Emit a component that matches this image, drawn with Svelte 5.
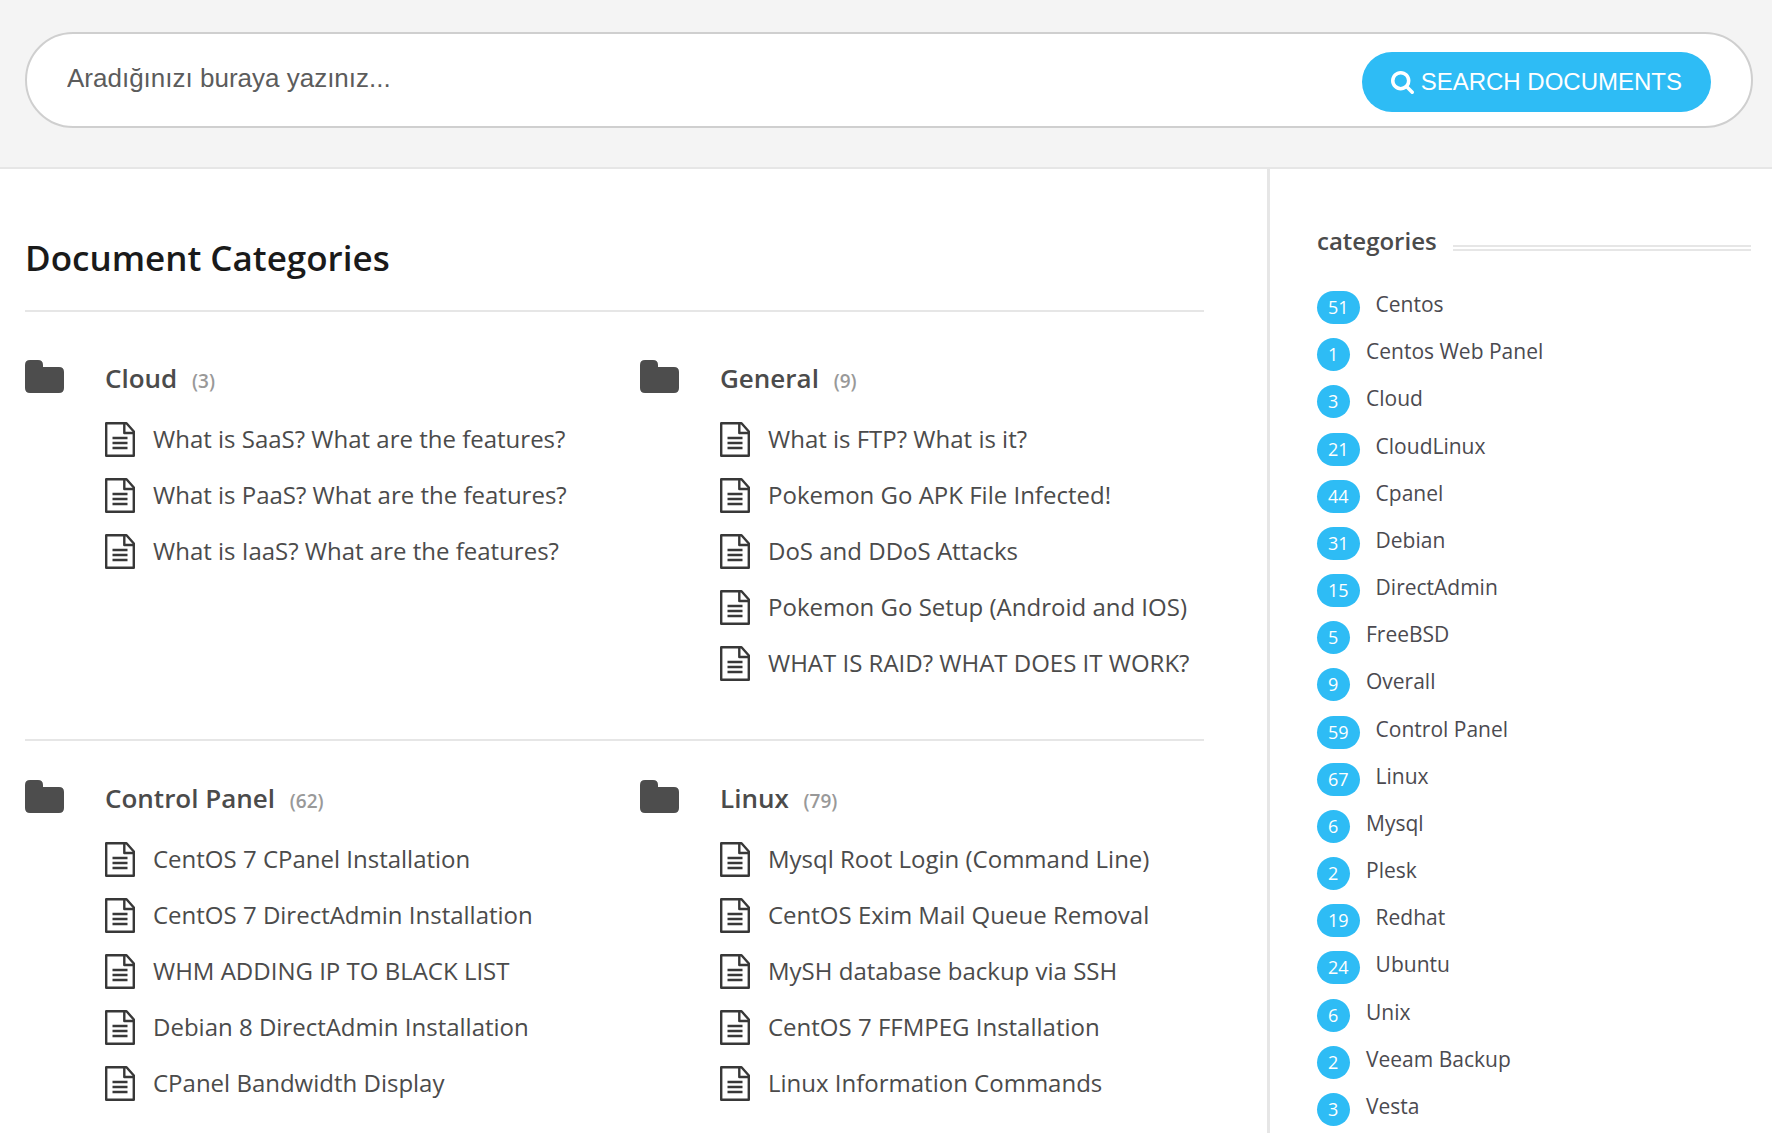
<script lang="ts">
  const sections = [
    [
      {
        name: 'Cloud',
        count: 3,
        docs: [
          'What is SaaS? What are the features?',
          'What is PaaS? What are the features?',
          'What is IaaS? What are the features?',
        ],
      },
      {
        name: 'General',
        count: 9,
        docs: [
          'What is FTP? What is it?',
          'Pokemon Go APK File Infected!',
          'DoS and DDoS Attacks',
          'Pokemon Go Setup (Android and IOS)',
          'WHAT IS RAID? WHAT DOES IT WORK?',
        ],
      },
    ],
    [
      {
        name: 'Control Panel',
        count: 62,
        docs: [
          'CentOS 7 CPanel Installation',
          'CentOS 7 DirectAdmin Installation',
          'WHM ADDING IP TO BLACK LIST',
          'Debian 8 DirectAdmin Installation',
          'CPanel Bandwidth Display',
        ],
      },
      {
        name: 'Linux',
        count: 79,
        docs: [
          'Mysql Root Login (Command Line)',
          'CentOS Exim Mail Queue Removal',
          'MySH database backup via SSH',
          'CentOS 7 FFMPEG Installation',
          'Linux Information Commands',
        ],
      },
    ],
  ];

  const categories = [
    { name: 'Centos', count: 51 },
    { name: 'Centos Web Panel', count: 1 },
    { name: 'Cloud', count: 3 },
    { name: 'CloudLinux', count: 21 },
    { name: 'Cpanel', count: 44 },
    { name: 'Debian', count: 31 },
    { name: 'DirectAdmin', count: 15 },
    { name: 'FreeBSD', count: 5 },
    { name: 'Overall', count: 9 },
    { name: 'Control Panel', count: 59 },
    { name: 'Linux', count: 67 },
    { name: 'Mysql', count: 6 },
    { name: 'Plesk', count: 2 },
    { name: 'Redhat', count: 19 },
    { name: 'Ubuntu', count: 24 },
    { name: 'Unix', count: 6 },
    { name: 'Veeam Backup', count: 2 },
    { name: 'Vesta', count: 3 },
  ];

  let query = $state('');
</script>

<div class="page">
  <header>
    <form class="search" role="search" onsubmit={(e) => e.preventDefault()}>
      <input type="text" aria-label="Search documents" placeholder="Aradığınızı buraya yazınız..." bind:value={query} />
      <button type="submit">
        <svg class="lens" viewBox="0 0 1664 1664" aria-hidden="true">
          <path d="M1152 704q0-185-131.500-316.500t-316.500-131.500-316.500 131.500-131.500 316.500 131.500 316.500 316.500 131.500 316.500-131.500 131.500-316.500zm512 832q0 52-38 90t-90 38q-54 0-90-38l-343-342q-179 124-399 124-143 0-273.500-55.500t-225-150-150-225-55.500-273.500 55.500-273.500 150-225 225-150 273.500-55.500 273.500 55.500 225 150 150 225 55.500 273.500q0 220-124 399l343 343q37 37 37 90z" />
        </svg>
        SEARCH DOCUMENTS
      </button>
    </form>
  </header>

  <div class="body">
    <main>
      <h1>Document Categories</h1>
      {#each sections as row}
        <div class="row">
          {#each row as cat}
            <section class="category">
              <svg class="folder" viewBox="0 0 39 33" aria-hidden="true">
                <path d="M5 0h8q5 0 5 5v2h16q5 0 5 5v16q0 5-5 5H5q-5 0-5-5V5q0-5 5-5z" />
              </svg>
              <div class="content">
                <h2><a href="#category">{cat.name}</a> <span class="count">({cat.count})</span></h2>
                <ul class="docs">
                  {#each cat.docs as doc}
                    <li>
                      <a href="#document">
                        <svg class="doc" viewBox="0 0 30 35" aria-hidden="true">
                          <path d="M1.200 1.200H21.500L28.800 9.500V33.800H1.200z" />
                          <path d="M19.300 1.200V11H28.800" />
                          <path d="M7.500 16h15M7.500 21h15M7.500 26h15" />
                        </svg>
                        <span>{doc}</span>
                      </a>
                    </li>
                  {/each}
                </ul>
              </div>
            </section>
          {/each}
        </div>
      {/each}
    </main>

    <aside>
      <h3>categories</h3>
      <ul class="tags">
        {#each categories as tag}
          <li><a href="#tag"><span class="badge">{tag.count}</span><span class="label">{tag.name}</span></a></li>
        {/each}
      </ul>
    </aside>
  </div>
</div>

<style>
  :global(body) {
    margin: 0;
    background: #fff;
  }

  .page {
    display: flex;
    flex-direction: column;
    min-height: 100vh;
    font-family: 'Open Sans', 'Noto Sans', sans-serif;
    color: #4b4b4b;
  }

  h1, h2, h3, ul {
    margin: 0;
    padding: 0;
  }

  ul {
    list-style: none;
  }

  a {
    color: inherit;
    text-decoration: none;
  }

  header {
    padding: 32px 19px 39px 25px;
    background: #f4f4f4;
    border-bottom: 2px solid #e6e6e6;
  }

  .search {
    display: flex;
    align-items: center;
    height: 88px;
    padding: 4px 40px 0;
    border: 2px solid #cfcfcf;
    border-radius: 48px;
    background: #fff;
  }

  .search input {
    flex: 1;
    min-width: 0;
    height: 52px;
    padding: 0 0 8px;
    border: 0;
    outline: 0;
    background: transparent;
    font: 26px/32px 'Liberation Sans', Arial, sans-serif;
    color: #5c5c5c;
  }

  .search input::placeholder {
    color: #5c5c5c;
    opacity: 1;
  }

  .search button {
    display: flex;
    align-items: center;
    gap: 7px;
    height: 60px;
    padding: 0 29px;
    border: 0;
    border-radius: 30px;
    background: #2ebcf5;
    font: 24px/28px 'Liberation Sans', Arial, sans-serif;
    color: #fff;
    cursor: pointer;
  }

  .lens {
    width: 23px;
    height: 23px;
    fill: #fff;
  }

  .body {
    flex: 1;
    display: flex;
  }

  main {
    flex: 1;
    padding: 0 63px 20px 25px;
  }

  h1 {
    padding: 65px 0 28px;
    font-size: 35px;
    line-height: 48px;
    font-weight: 600;
    color: #1a1a1a;
  }

  .row {
    display: grid;
    grid-template-columns: 1fr 1fr;
    gap: 51px;
    padding: 39px 0 48px;
    border-top: 2px solid #e6e6e6;
  }

  h1 + .row {
    padding-top: 48px;
  }

  .row:last-child {
    padding-bottom: 0;
  }

  .category {
    display: flex;
    align-items: flex-start;
    gap: 41px;
  }

  .folder {
    flex: none;
    width: 39px;
    height: 33px;
    fill: #4d4d4d;
  }

  h2 {
    font-size: 26px;
    line-height: 36px;
    font-weight: 600;
    padding-bottom: 12px;
  }

  .count {
    margin-left: 8px;
    font-size: 19px;
    color: #999;
  }

  .docs a {
    display: flex;
    align-items: center;
    gap: 18px;
    height: 56px;
    font-size: 24px;
    line-height: 32px;
    white-space: nowrap;
  }

  .doc {
    flex: none;
    width: 30px;
    height: 35px;
    fill: none;
    stroke: #383838;
    stroke-width: 2.400;
    stroke-linejoin: round;
  }

  aside {
    box-sizing: border-box;
    flex: 0 0 505px;
    display: flex;
    flex-direction: column;
    padding: 56px 21px 7px 47px;
    border-left: 3px solid #e6e6e6;
  }

  h3 {
    display: flex;
    align-items: center;
    gap: 16px;
    margin-bottom: 34px;
    font-size: 24px;
    line-height: 32px;
    font-weight: 600;
  }

  h3::after {
    content: '';
    flex: 1;
    height: 2px;
    margin-top: 14px;
    border: solid #e6e6e6;
    border-width: 2px 0;
  }

  .tags {
    flex: 1;
    display: flex;
    flex-direction: column;
    justify-content: space-between;
  }

  .tags a {
    display: flex;
    gap: 16px;
  }

  .badge {
    box-sizing: border-box;
    min-width: 33px;
    padding: 0 11px;
    border-radius: 17px;
    background: #2ebcf5;
    font-size: 18px;
    line-height: 33px;
    color: #fff;
  }

  .label {
    font-size: 21px;
    line-height: 27px;
    color: #4b4a50;
  }
</style>
